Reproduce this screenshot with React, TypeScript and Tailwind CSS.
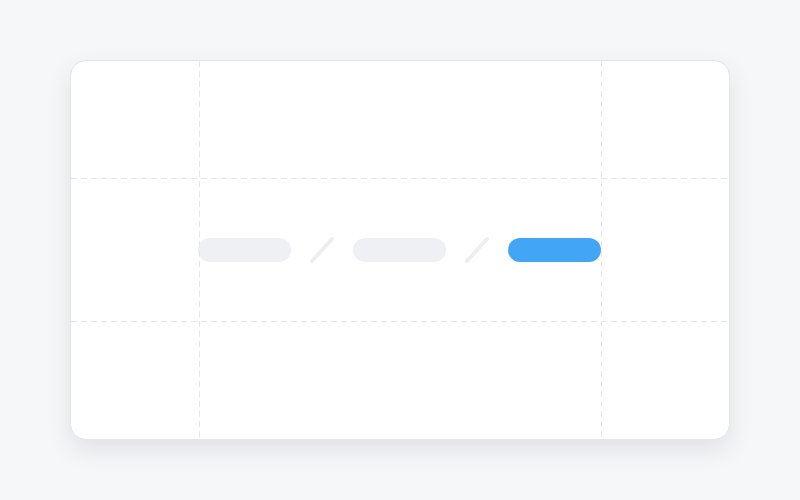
const Slash = () => (
  <svg width="26" height="28" viewBox="0 0 26 28" className="shrink-0">
    <line x1="3" y1="25" x2="23" y2="3" stroke="#eceef2" strokeWidth="4" strokeLinecap="round" />
  </svg>
);

const Pill = ({active}: {active?: boolean}) => (
  <div className={`h-6 w-[93px] rounded-full ${active ? 'bg-[#42a5f5]' : 'bg-[#eff0f4]'}`} />
);

export default function App() {
  return (
    <div className="flex h-[500px] w-[800px] items-center justify-center bg-[#f6f7f9]">
      <div className="relative h-[380px] w-[660px] overflow-hidden rounded-2xl border border-[#e3e5e9] bg-white shadow-[0_10px_24px_rgba(30,40,60,0.10)]">
        {/* guide lines */}
        <div className="absolute top-0 bottom-0 left-[128px] w-px bg-[repeating-linear-gradient(to_bottom,#e4e6ea_0,#e4e6ea_6px,transparent_6px,transparent_10px)]" />
        <div className="absolute top-0 bottom-0 left-[530px] w-px bg-[repeating-linear-gradient(to_bottom,#e4e6ea_0,#e4e6ea_6px,transparent_6px,transparent_10px)]" />
        <div className="absolute left-0 right-0 top-[117px] h-px bg-[repeating-linear-gradient(to_right,#e4e6ea_0,#e4e6ea_6px,transparent_6px,transparent_10px)]" />
        <div className="absolute left-0 right-0 top-[260px] h-px bg-[repeating-linear-gradient(to_right,#e4e6ea_0,#e4e6ea_6px,transparent_6px,transparent_10px)]" />

        <div className="flex h-full items-center justify-center gap-[18px] pr-px">
          <Pill />
          <Slash />
          <Pill />
          <Slash />
          <Pill active />
        </div>
      </div>
    </div>
  );
}
